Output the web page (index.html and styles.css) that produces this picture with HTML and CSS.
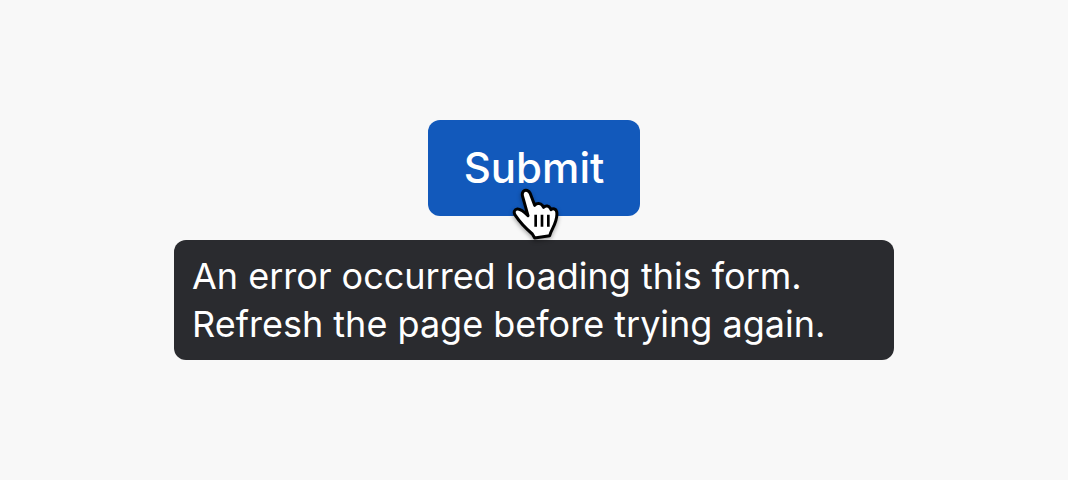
FILE: index.html
```html
<!DOCTYPE html>
<html lang="en">
<head>
<meta charset="utf-8">
<title>Submit</title>
<link rel="stylesheet" href="styles.css">
</head>
<body>
<main class="stage">
  <div class="button-wrap">
    <button class="submit" type="button">Submit</button>
    <svg class="cursor" viewBox="0 0 210 195" width="70" height="65" aria-hidden="true">
      <path class="hand" d="M70 34C77 28 87 31 91 41L104 76C110 68 122 69 127 76L131 82C137 75 147 77 151 85L153 89C159 84 168 87 170 95C173 111 166 129 158 145C154 153 151 160 149 167L104 174L97 162C82 149 60 127 46 106C39 96 44 88 52 87C62 86 71 94 84 107L68 50C66 44 66 39 70 34Z"/>
      <path class="lines" d="M107 104V140M126 104V140M145 104V140"/>
    </svg>
  </div>
  <div class="tooltip">An error occurred loading this form.<br>Refresh the page before trying again.</div>
</main>
</body>
</html>
```
FILE: styles.css
```css
* { box-sizing: border-box; }
html, body { margin: 0; height: 100%; }
body {
  background: #f8f8f8;
  font-family: Inter, "Liberation Sans", sans-serif;
  overflow: hidden;
}
.stage {
  height: 480px;
  display: flex;
  flex-direction: column;
  align-items: center;
  justify-content: center;
  gap: 24px;
}
.button-wrap { position: relative; display: flex; }
.submit {
  width: 212px;
  height: 96px;
  padding: 0;
  border: 0;
  border-radius: 12px;
  background: #1259bb;
  color: #fff;
  font: 500 42px/48px Inter, "Liberation Sans", sans-serif;
}
.cursor {
  position: absolute;
  left: 72px;
  top: 60px;
  overflow: visible;
  filter: drop-shadow(0 2px 2px rgba(0,0,0,.35));
}
.hand { fill: #fff; stroke: #000; stroke-width: 9; stroke-linejoin: round; }
.lines { fill: none; stroke: #000; stroke-width: 8; }
.tooltip {
  width: 720px;
  height: 120px;
  padding: 12px 18px;
  border-radius: 12px;
  background: #2a2b2f;
  color: #fff;
  font-size: 36px;
  line-height: 48px;
  white-space: nowrap;
}
```
